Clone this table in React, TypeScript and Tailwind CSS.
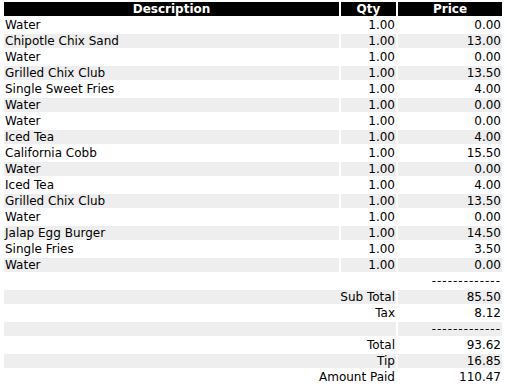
const items: [string, string][] = [
  ['Water', '0.00'],
  ['Chipotle Chix Sand', '13.00'],
  ['Water', '0.00'],
  ['Grilled Chix Club', '13.50'],
  ['Single Sweet Fries', '4.00'],
  ['Water', '0.00'],
  ['Water', '0.00'],
  ['Iced Tea', '4.00'],
  ['California Cobb', '15.50'],
  ['Water', '0.00'],
  ['Iced Tea', '4.00'],
  ['Grilled Chix Club', '13.50'],
  ['Water', '0.00'],
  ['Jalap Egg Burger', '14.50'],
  ['Single Fries', '3.50'],
  ['Water', '0.00'],
]

// label = null means a separator row with dashes in the price column
const totals: { label: string | null; value: string }[] = [
  { label: null, value: '-------------' },
  { label: 'Sub Total', value: '85.50' },
  { label: 'Tax', value: '8.12' },
  { label: null, value: '-------------' },
  { label: 'Total', value: '93.62' },
  { label: 'Tip', value: '16.85' },
  { label: 'Amount Paid', value: '110.47' },
]

const cell = 'p-0 h-[14px] leading-[14px] whitespace-nowrap'

export default function App() {
  return (
    <div className="bg-white w-[507px] h-[388px] overflow-hidden font-['DejaVu_Sans',sans-serif] text-[12px] text-black">
      <table className="ml-[2px] w-[502px] border-separate border-spacing-[2px] table-fixed">
        <colgroup>
          <col className="w-[335px]" />
          <col className="w-[55px]" />
          <col className="w-[104px]" />
        </colgroup>
        <thead>
          <tr className="bg-black text-white font-bold">
            <th className={`${cell} text-center`}>Description</th>
            <th className={`${cell} text-center`}>Qty</th>
            <th className={`${cell} text-center`}>Price</th>
          </tr>
        </thead>
        <tbody>
          {items.map(([name, price], i) => (
            <tr key={i} className={i % 2 === 1 ? 'bg-[#eeeeee]' : ''}>
              <td className={`${cell} text-left pl-[1px]`}>{name}</td>
              <td className={`${cell} text-right pr-[1px]`}>1.00</td>
              <td className={`${cell} text-right pr-[1px]`}>{price}</td>
            </tr>
          ))}
          {totals.map((t, j) => {
            const i = items.length + j
            return (
              <tr key={i} className={i % 2 === 1 ? 'bg-[#eeeeee]' : ''}>
                <td colSpan={2} className={`${cell} text-right pr-[1px]`}>{t.label ?? ''}</td>
                <td className={`${cell} text-right pr-[1px] ${t.label === null ? 'tracking-[1px]' : ''}`}>
                  {t.value}
                </td>
              </tr>
            )
          })}
        </tbody>
      </table>
    </div>
  )
}
